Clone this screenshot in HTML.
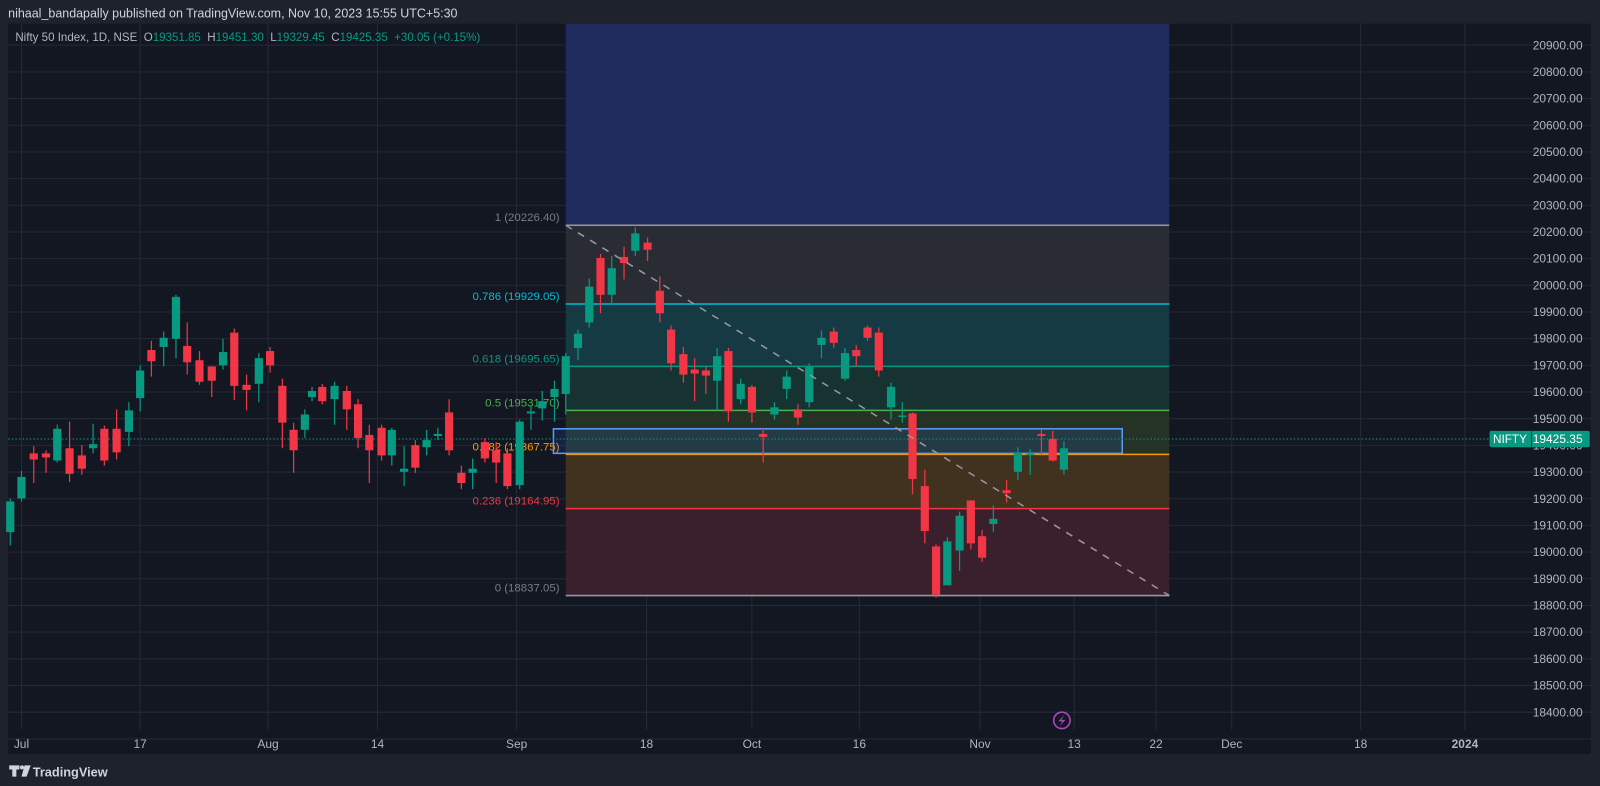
<!DOCTYPE html>
<html><head><meta charset="utf-8"><style>
html,body{margin:0;padding:0;background:#1e222d;width:1600px;height:786px;overflow:hidden}
svg{display:block}
text{font-family:"Liberation Sans",sans-serif;white-space:pre}
</style></head><body>
<svg id="s" width="1600" height="786" viewBox="0 0 1564 768" xmlns="http://www.w3.org/2000/svg">
<rect x="0" y="0" width="1564" height="768" fill="#1e222d"/>
<text x="8" y="17" font-size="12.2" fill="#d1d4dc">nihaal_bandapally published on TradingView.com, Nov 10, 2023 15:55 UTC+5:30</text>
<rect x="8" y="23" width="1547" height="714" fill="#131722"/>
<g id="grid" stroke="#252a36" stroke-width="1"></g>
<rect x="553" y="23" width="590" height="197" fill="#1e2b5c"/>
<rect x="553" y="220" width="590" height="77" fill="#2a2c34"/>
<rect x="553" y="297" width="590" height="61" fill="#153a43"/>
<rect x="553" y="358" width="590" height="43" fill="#163331"/>
<rect x="553" y="401" width="590" height="43" fill="#243325"/>
<rect x="553" y="444" width="590" height="53" fill="#40321f"/>
<rect x="553" y="497" width="590" height="85" fill="#3a1f2c"/>
<line x1="553" y1="220" x2="1143" y2="220" stroke="#9598a1" stroke-width="1.5"/>
<line x1="553" y1="297" x2="1143" y2="297" stroke="#00bcd4" stroke-width="1.5"/>
<line x1="553" y1="358" x2="1143" y2="358" stroke="#089981" stroke-width="1.5"/>
<line x1="553" y1="401" x2="1143" y2="401" stroke="#4caf50" stroke-width="1.5"/>
<line x1="553" y1="444" x2="1143" y2="444" stroke="#ff9800" stroke-width="1.5"/>
<line x1="553" y1="497" x2="1143" y2="497" stroke="#f23645" stroke-width="1.5"/>
<line x1="553" y1="582" x2="1143" y2="582" stroke="#9598a1" stroke-width="1.5"/>
<g font-size="11.2" text-anchor="end">
<text x="547" y="216" fill="#787b86">1 (20226.40)</text>
<text x="547" y="293" fill="#00bcd4">0.786 (19929.05)</text>
<text x="547" y="354" fill="#089981">0.618 (19695.65)</text>
<text x="547" y="397" fill="#4caf50">0.5 (19531.70)</text>
<text x="547" y="440" fill="#ff9800">0.382 (19367.75)</text>
<text x="547" y="493" fill="#f23645">0.236 (19164.95)</text>
<text x="547" y="578" fill="#787b86">0 (18837.05)</text>
</g>
<rect x="541" y="419" width="556" height="24" fill="rgba(41,98,255,0.15)" stroke="#5b9cf6" stroke-width="1.5"/>
<line x1="8" y1="429" x2="1456" y2="429" stroke="#089981" stroke-width="1" stroke-dasharray="1.5 2"/>
<g id="c"></g>
<line x1="553" y1="220" x2="1143" y2="582" stroke="#9598a1" stroke-width="1.5" stroke-dasharray="7 7"/>
<g id="pl" font-size="11.7" fill="#b2b5be" text-anchor="end"></g>
<rect x="1456" y="421" width="98" height="16" rx="2" fill="#089981"/>
<line x1="1497" y1="421" x2="1497" y2="437" stroke="#131722" stroke-width="0.7"/>
<text x="1476" y="433" font-size="11.5" fill="#fff" text-anchor="middle">NIFTY</text>
<text x="1547" y="433" font-size="11.7" fill="#fff" text-anchor="end">19425.35</text>
<g id="dl" font-size="11.7" fill="#b2b5be" text-anchor="middle"></g>
<circle cx="1038" cy="704" r="8" fill="none" stroke="#ab47bc" stroke-width="1.6"/>
<path d="M1040.5 698.5 L1034.5 705 H1038.5 L1035.5 710 L1041.5 703.5 H1037.5 Z" fill="#ab47bc"/>
<text x="15" y="40" font-size="11.3" fill="#b2b5be">Nifty 50 Index, 1D, NSE  O<tspan fill="#089981">19351.85</tspan>  H<tspan fill="#089981">19451.30</tspan>  L<tspan fill="#089981">19329.45</tspan>  C<tspan fill="#089981">19425.35</tspan>  <tspan fill="#089981">+30.05 (+0.15%)</tspan></text>
<g fill="#d1d4dc">
<path d="M9 748 H19 V752 H16 V759 H12 V752 H9 Z"/>
<circle cx="21.5" cy="750" r="2"/>
<path d="M24 748 H30 L26 759 H21 Z"/>
</g>
<text x="32" y="759" font-size="12.5" font-weight="bold" fill="#d1d4dc">TradingView</text>
</svg>
<script>
var NS="http://www.w3.org/2000/svg";
function el(p,t,a,txt){var e=document.createElementNS(NS,t);for(var k in a)e.setAttribute(k,a[k]);if(txt)e.textContent=txt;document.getElementById(p).appendChild(e);return e;}
for(var i=0;i<=26;i++){var y=44+i*26.08;el('grid','line',{x1:8,x2:1555,y1:y,y2:y});if(i<=25)el('pl','text',{x:1547,y:y+4},(20900-i*100).toFixed(2));}
var dx=[[21,'Jul'],[137,'17'],[262,'Aug'],[369,'14'],[505,'Sep'],[632,'18'],[735,'Oct'],[840,'16'],[958,'Nov'],[1050,'13'],[1130,'22'],[1204,'Dec'],[1330,'18'],[1432,'2024']];
dx.forEach(function(d){el('grid','line',{x1:d[0],x2:d[0],y1:23,y2:713});var t=el('dl','text',{x:d[0],y:731},d[1]);if(d[1]=='2024')t.setAttribute('font-weight','bold');});
var C=[
[10,'g',490,520,487,533],[21,'g',466,487,460,490],[33,'r',443,449,436,472],[45,'r',443,447,440,462],[56,'g',419,450,415,452],[68,'r',438,463,412,471],[80,'r',445,458,435,464],[91,'g',434,438,414,443],[102,'r',419,450,416,455],[114,'r',419,442,400,449],[126,'g',401,422,393,436],[137,'g',362,389,357,402],[148,'r',342,353,333,368],[160,'g',330,339,324,358],[172,'g',290,331,288,350],[183,'r',338,354,315,366],[195,'r',352,373,343,376],[207,'r',358,372,358,388],[218,'g',344,357,331,361],[229,'r',325,377,321,391],[241,'r',376,381,366,401],[253,'g',350,375,345,393],[264,'r',343,357,339,364],[276,'r',377,413,370,438],
[287,'r',420,440,413,462],[298,'g',405,420,400,428],[305,'g',382,388,378,392],[315,'r',378,392,375,395],[327,'g',377,390,373,415],[339,'r',382,400,377,420],[350,'r',395,428,390,438],[361,'r',425,440,415,472],[373,'r',418,445,415,450],[383,'g',420,445,418,455],[395,'g',458,461,436,475],[406,'r',435,457,430,462],[417,'g',430,437,420,445],[428,'g',424,426,418,430],[439,'r',403,440,390,445],[451,'r',462,472,455,478],[462,'g',458,462,448,478],[474,'r',432,448,428,452],[485,'r',440,452,432,472],[496,'r',443,475,438,478],[508,'g',412,474,410,478],[519,'g',402,404,396,420],[530,'g',392,399,382,411],[542,'g',380,388,372,412],
[553,'g',348,385,345,405],[565,'g',326,340,322,352],[576,'g',280,315,272,320],[587,'r',252,288,248,306],[598,'g',262,288,250,298],[610,'r',251,257,241,273],[621,'g',228,245,222,250],[633,'r',237,244,232,255],[645,'r',284,306,270,315],[656,'r',322,355,318,362],[668,'r',346,366,339,374],[679,'r',361,365,350,392],[690,'r',362,367,358,385],[701,'g',348,372,340,400],[712,'r',343,402,340,412],[724,'g',375,390,370,395],[735,'r',378,403,376,413],[746,'r',424,427,418,452],[757,'g',398,405,393,410],[769,'g',368,380,362,390],[780,'r',400,408,395,415],[791,'g',358,393,355,398],[803,'g',330,337,323,350],[815,'r',324,335,320,340],[826,'g',345,370,340,372],[837,'r',342,348,337,358],[848,'r',320,330,318,333],[859,'r',325,362,320,368],[871,'g',378,398,374,410],[882,'g',406,407,393,413],[892,'r',404,468,403,483],[904,'r',475,519,459,531],[915,'r',534,581,532,584],[926,'g',529,572,525,572],[938,'g',504,538,500,558],[949,'r',489,531,489,537],[960,'r',524,545,518,549],[971,'g',507,512,494,520],[984,'r',479,482,469,491],[995,'g',442,461,437,469],[1007,'g',443,444,439,464],[1018,'r',424,426,420,445],[1029,'r',429,450,421,451],[1040,'g',438,459,431,464]];
C.forEach(function(c){var col=c[1]=='g'?'#089981':'#f23645';
el('c','rect',{x:c[0]-0.6,y:c[4],width:1.2,height:c[5]-c[4],fill:col});
el('c','rect',{x:c[0]-4,y:c[2],width:8,height:Math.max(1.5,c[3]-c[2]),fill:col});});
</script>
</body></html>
